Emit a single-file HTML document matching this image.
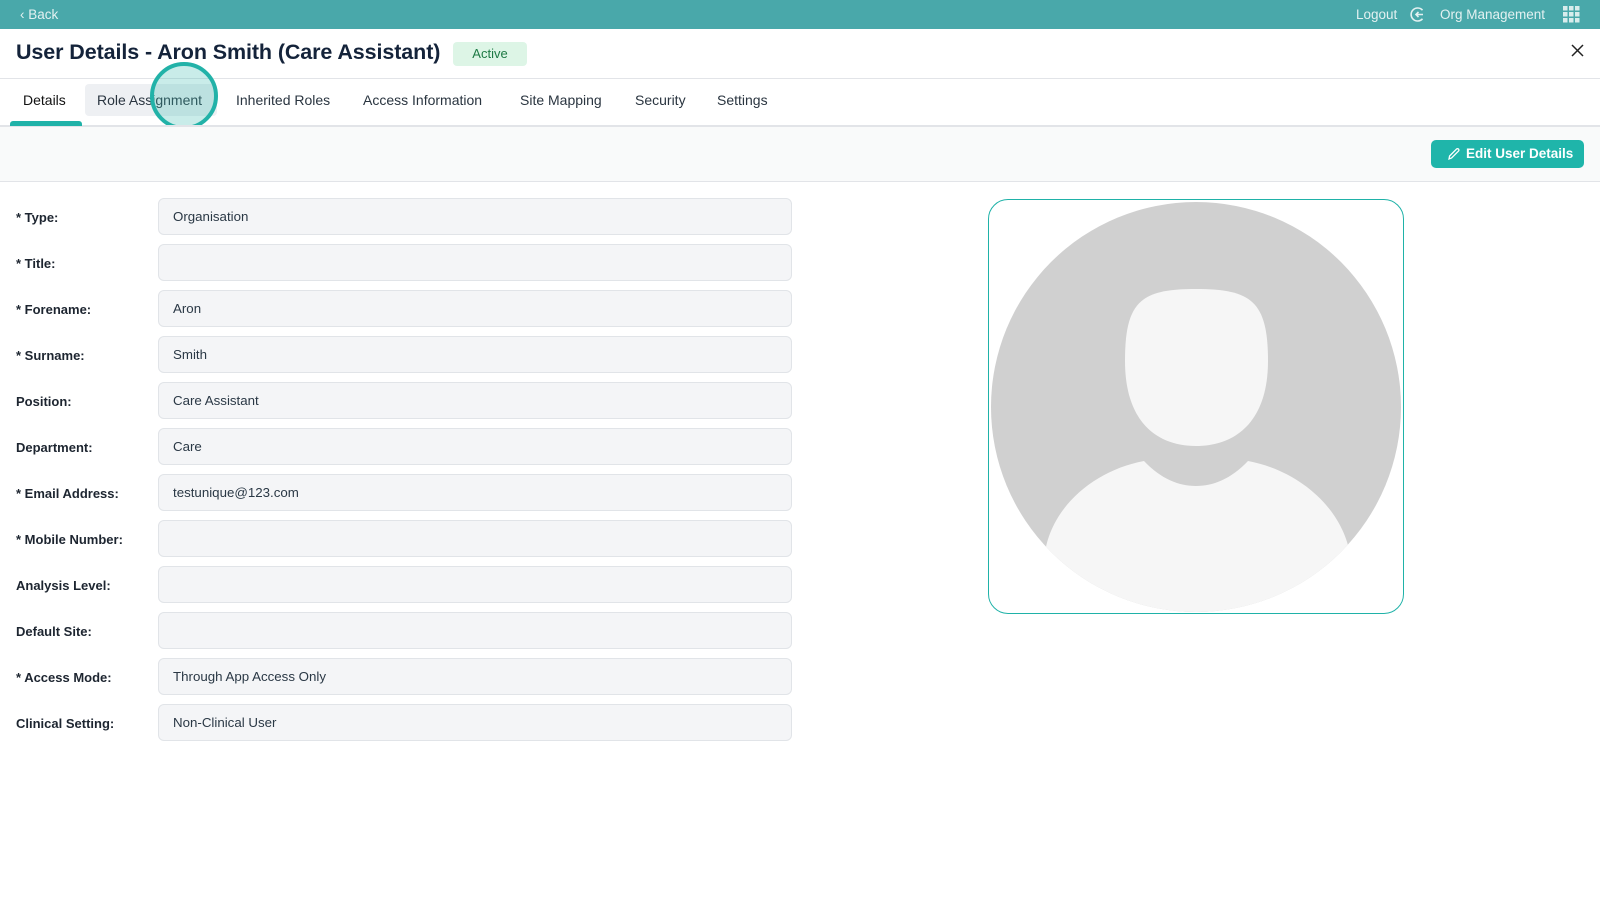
<!DOCTYPE html>
<html><head><meta charset="utf-8"><style>
*{box-sizing:border-box;margin:0;padding:0}
body{width:1600px;height:900px;overflow:hidden;background:#fff;font-family:"Liberation Sans",sans-serif;color:#1d2b3a;position:relative}
.top{position:absolute;left:0;top:0;width:1600px;height:29px;background:#49a8aa;color:#e3f1f1;font-size:13.5px}
.abs{position:absolute}
.title{left:16px;top:40px;font-size:21.5px;font-weight:bold;color:#14233a;letter-spacing:-0.1px}
.badge{left:453px;top:42px;width:74px;height:24px;background:#ddf5e6;color:#1e7a45;border-radius:4px;font-size:13px;text-align:center;line-height:24px}
.tab{top:92px;font-size:14px;color:#2a3540}
.lbl{left:16px;font-size:13px;font-weight:bold;color:#1d2530}
.inp{left:158px;width:634px;height:37px;background:#f4f5f7;border:1px solid #e1e4e8;border-radius:6px;font-size:13.3px;color:#2a3845;padding-left:14px;line-height:35px}
</style></head><body>
<div class="top">
 <div class="abs" style="left:20px;top:7px">‹ Back</div>
 <div class="abs" style="left:1356px;top:7px">Logout</div>
 <svg class="abs" style="left:1409px;top:6px" width="17" height="17" viewBox="0 0 17 17"><path d="M13.5 4.2A6.5 6.5 0 1 0 13.5 12.8" fill="none" stroke="#e3f1f1" stroke-width="1.6"/><path d="M14 8.5H7M9.5 6L7 8.5 9.5 11" fill="none" stroke="#e3f1f1" stroke-width="1.6"/></svg>
 <div class="abs" style="left:1440px;top:7px">Org Management</div>
 <svg class="abs" style="left:1563px;top:6px" width="17" height="17"><g fill="#d8ecec"><rect x="0" y="0" width="4.5" height="4.5"/><rect x="6" y="0" width="4.5" height="4.5"/><rect x="12" y="0" width="4.5" height="4.5"/><rect x="0" y="6" width="4.5" height="4.5"/><rect x="6" y="6" width="4.5" height="4.5"/><rect x="12" y="6" width="4.5" height="4.5"/><rect x="0" y="12" width="4.5" height="4.5"/><rect x="6" y="12" width="4.5" height="4.5"/><rect x="12" y="12" width="4.5" height="4.5"/></g></svg>
</div>
<div class="abs title">User Details - Aron Smith (Care Assistant)</div>
<div class="abs badge">Active</div>
<svg class="abs" style="left:1571px;top:44px" width="13" height="13"><path d="M1 1L12 12M12 1L1 12" stroke="#222" stroke-width="1.5"/></svg>
<div class="abs" style="left:0;top:78px;width:1600px;height:1px;background:#e2e4e8"></div>
<div class="abs" style="left:85px;top:84px;width:132px;height:32px;background:#eef0f3;border-radius:4px"></div>
<div class="abs tab" style="left:23px;color:#111">Details</div>
<div class="abs tab" style="left:97px">Role Assignment</div>
<div class="abs tab" style="left:236px">Inherited Roles</div>
<div class="abs tab" style="left:363px">Access Information</div>
<div class="abs tab" style="left:520px">Site Mapping</div>
<div class="abs tab" style="left:635px">Security</div>
<div class="abs tab" style="left:717px">Settings</div>
<div class="abs" style="left:150px;top:62px;width:68px;height:68px;border-radius:50%;border:4px solid #22b2a8;background:rgba(60,185,175,0.28)"></div>
<div class="abs" style="left:0;top:125px;width:1600px;height:57px;background:#f9fafa;border-top:2px solid #e2e4e8;border-bottom:1px solid #e2e4e8"></div>
<div class="abs" style="left:10px;top:121px;width:72px;height:5px;background:#20b2a8;border-radius:3px 3px 0 0"></div>
<div class="abs" style="left:1431px;top:140px;width:153px;height:28px;background:#1fb5aa;border-radius:5px;color:#fff;font-size:13.5px;font-weight:bold;line-height:28px;padding-left:35px">Edit User Details</div>
<svg class="abs" style="left:1447px;top:147px" width="14" height="14" viewBox="0 0 14 14"><path d="M2 12L2.6 9 9.5 2.1a1.4 1.4 0 0 1 2 2L4.6 11 2 12Z" fill="none" stroke="#fff" stroke-width="1.3"/></svg>

<div class="abs lbl" style="top:210px">* Type:</div><div class="abs inp" style="top:198px">Organisation</div>
<div class="abs lbl" style="top:256px">* Title:</div><div class="abs inp" style="top:244px"></div>
<div class="abs lbl" style="top:302px">* Forename:</div><div class="abs inp" style="top:290px">Aron</div>
<div class="abs lbl" style="top:348px">* Surname:</div><div class="abs inp" style="top:336px">Smith</div>
<div class="abs lbl" style="top:394px">Position:</div><div class="abs inp" style="top:382px">Care Assistant</div>
<div class="abs lbl" style="top:440px">Department:</div><div class="abs inp" style="top:428px">Care</div>
<div class="abs lbl" style="top:486px">* Email Address:</div><div class="abs inp" style="top:474px">testunique@123.com</div>
<div class="abs lbl" style="top:532px">* Mobile Number:</div><div class="abs inp" style="top:520px"></div>
<div class="abs lbl" style="top:578px">Analysis Level:</div><div class="abs inp" style="top:566px"></div>
<div class="abs lbl" style="top:624px">Default Site:</div><div class="abs inp" style="top:612px"></div>
<div class="abs lbl" style="top:670px">* Access Mode:</div><div class="abs inp" style="top:658px">Through App Access Only</div>
<div class="abs lbl" style="top:716px">Clinical Setting:</div><div class="abs inp" style="top:704px">Non-Clinical User</div>

<div class="abs" style="left:988px;top:199px;width:416px;height:415px;border:1.5px solid #1fb2a8;border-radius:20px;overflow:hidden;background:#fff">
<svg width="416" height="415" viewBox="988 199 416 415">
<defs><clipPath id="c"><circle cx="1195" cy="406" r="205"/></clipPath></defs>
<circle cx="1195" cy="406" r="205" fill="#d0d0d0"/>
<g clip-path="url(#c)" fill="#f6f6f6">
<path d="M1124 360C1124 300 1140 288 1195 288C1250 288 1267 300 1267 360C1267 420 1235 445 1195 445C1155 445 1124 420 1124 360Z"/>
<path d="M1043 560C1046 510 1090 470 1143 460C1160 478 1178 485 1195 485C1212 485 1230 478 1247 460C1300 470 1345 510 1350 560L1360 640L1035 640Z"/>
</g></svg></div>
</body></html>
